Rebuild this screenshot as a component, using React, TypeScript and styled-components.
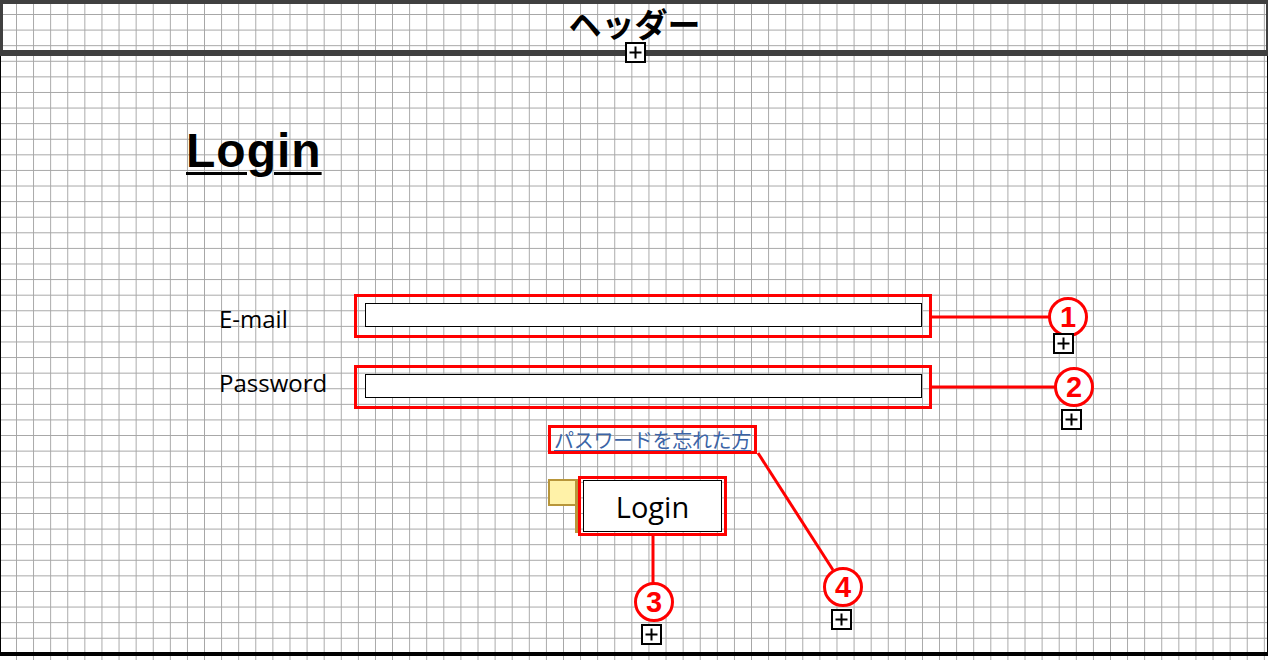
import React from 'react';
import styled, { createGlobalStyle } from 'styled-components';

const GlobalStyle = createGlobalStyle`
  html, body {
    margin: 0;
    padding: 0;
    background: #ffffff;
  }
  * {
    box-sizing: border-box;
  }
`;

const RED = '#ff0000';

const Page = styled.div`
  position: relative;
  width: 1268px;
  height: 660px;
  overflow: hidden;
  background-color: #ffffff;
  background-image: linear-gradient(to right, #a6a6a6 1px, transparent 1px),
    linear-gradient(to bottom, #a6a6a6 1px, transparent 1px);
  background-size: 17.1px 15.6px;
  background-position: 16px 14px;
  font-family: 'Open Sans', 'Noto Sans CJK JP', sans-serif;
`;

const Header = styled.header`
  height: 56px;
  display: flex;
  justify-content: center;
  align-items: center;
  padding-bottom: 8px;
  border-top: 4px solid #404040;
  border-left: 3px solid #404040;
  border-right: 2px solid #404040;
  border-bottom: 6px solid #404040;
  font-family: 'Noto Sans CJK JP', sans-serif;
  font-weight: 700;
  font-size: 33px;
  line-height: 1;
  color: #000;
`;

const Main = styled.main`
  height: 600px;
  display: flex;
  flex-direction: column;
  padding-top: 67px;
  border-left: 1px solid #000;
  border-right: 1px solid #000;
  border-bottom: 4px solid #000;
`;

const Title = styled.h1`
  margin: 0;
  padding-left: 185px;
  font-family: 'Liberation Sans', Arial, sans-serif;
  font-size: 48px;
  font-weight: 700;
  line-height: 56px;
  letter-spacing: 1px;
  color: #000;

  span {
    text-decoration: underline;
    text-decoration-thickness: 2.5px;
    text-underline-offset: 5px;
  }
`;

const Form = styled.div`
  margin-top: 115px;
  display: flex;
  flex-direction: column;
  gap: 27px;
`;

const Row = styled.div`
  display: flex;
  align-items: center;
  padding-left: 218px;
`;

// $lift moves the label up (negative = down) from the row's centre line
const Label = styled.label<{ $lift: number }>`
  width: 135px;
  padding-top: ${(p) => (p.$lift < 0 ? -2 * p.$lift : 0)}px;
  padding-bottom: ${(p) => (p.$lift > 0 ? 2 * p.$lift : 0)}px;
  font-size: 24px;
  line-height: 32px;
  color: #000;
`;

const Highlight = styled.div<{ $w?: number; $h: number }>`
  width: ${(p) => (p.$w ? `${p.$w}px` : 'auto')};
  height: ${(p) => p.$h}px;
  border: 3px solid ${RED};
`;

const FieldFrame = styled(Highlight)`
  padding: 6px 0 0 8px;
`;

const TextBox = styled.div`
  width: 557px;
  height: 24px;
  border: 1px solid #000;
  background: #fff;
`;

const LinkRow = styled.div`
  margin-top: 16px;
  padding-left: 547px;
  display: flex;
`;

const LinkFrame = styled(Highlight)`
  padding: 0 3px;
`;

const ForgotLink = styled.a`
  display: block;
  font-family: 'Noto Sans CJK JP', sans-serif;
  font-size: 20px;
  line-height: 23px;
  letter-spacing: -0.3px;
  color: #3b64a6;
  text-decoration: underline;
  text-decoration-thickness: 1px;
  text-underline-offset: 2px;
  cursor: pointer;
`;

const ButtonRow = styled.div`
  margin-top: 22px;
  padding-left: 547px;
  display: flex;
  align-items: flex-start;
`;

const Sticky = styled.div`
  margin-top: 3px;
  width: 27px;
  height: 27px;
  background: #fff2a8;
  border: 2px solid #b8963a;
  border-right: none;
`;

const StickyBar = styled.div`
  margin-top: 3px;
  width: 3px;
  height: 54px;
  background: #b8963a;
`;

const ButtonFrame = styled(Highlight)`
  padding: 1px 2px;
`;

const LoginButton = styled.button`
  width: 139px;
  height: 52px;
  border: 1px solid #000;
  background: #fff;
  font-family: 'Open Sans', sans-serif;
  font-size: 29px;
  color: #000;
  padding: 0;
  cursor: pointer;
`;

const Overlay = styled.svg`
  position: absolute;
  left: 0;
  top: 0;
  pointer-events: none;
`;

const Marker = styled.div<{ $x: number; $y: number }>`
  position: absolute;
  left: ${(p) => p.$x - 20}px;
  top: ${(p) => p.$y - 20}px;
  width: 40px;
  height: 40px;
  border-radius: 50%;
  border: 3px solid ${RED};
  background: #fff;
  display: flex;
  align-items: center;
  justify-content: center;
  padding-top: 1px;
  font-family: 'Liberation Sans', Arial, sans-serif;
  font-weight: 700;
  font-size: 29px;
  line-height: 1;
  color: ${RED};
`;

const PlusBox = styled.div<{ $x: number; $y: number }>`
  position: absolute;
  left: ${(p) => p.$x}px;
  top: ${(p) => p.$y}px;
  width: 21px;
  height: 21px;
  border: 2px solid #000;
  background: #fff;
  display: flex;
  align-items: center;
  justify-content: center;
`;

const Plus = ({ x, y }: { x: number; y: number }) => (
  <PlusBox $x={x} $y={y}>
    <svg width="17" height="17" viewBox="0 0 17 17">
      <path d="M2.5 8.5H14.5M8.5 2.5V14.5" stroke="#000" strokeWidth="2" />
    </svg>
  </PlusBox>
);

const markers = [
  { n: '1', x: 1068, y: 317 },
  { n: '2', x: 1074, y: 387 },
  { n: '3', x: 654, y: 602 },
  { n: '4', x: 843, y: 587 },
];

const pluses = [
  { x: 625, y: 42 },
  { x: 1053, y: 333 },
  { x: 1061, y: 409 },
  { x: 641, y: 624 },
  { x: 831, y: 609 },
];

export default function App() {
  return (
    <>
      <GlobalStyle />
      <Page>
        <Header>ヘッダー</Header>
        <Main>
          <Title>
            <span>Login</span>
          </Title>
          <Form>
            <Row>
              <Label $lift={-3}>E-mail</Label>
              <FieldFrame $w={578} $h={44}>
                <TextBox />
              </FieldFrame>
            </Row>
            <Row>
              <Label $lift={4.5}>Password</Label>
              <FieldFrame $w={578} $h={44}>
                <TextBox />
              </FieldFrame>
            </Row>
          </Form>
          <LinkRow>
            <LinkFrame $h={29}>
              <ForgotLink>パスワードを忘れた方</ForgotLink>
            </LinkFrame>
          </LinkRow>
          <ButtonRow>
            <Sticky />
            <StickyBar />
            <ButtonFrame $w={149} $h={60}>
              <LoginButton>Login</LoginButton>
            </ButtonFrame>
          </ButtonRow>
        </Main>

        {/* annotation connectors */}
        <Overlay width="1268" height="660">
          <g stroke={RED} strokeWidth="3" fill="none">
            <line x1="932" y1="317" x2="1049" y2="317" />
            <line x1="932" y1="387" x2="1055" y2="387" />
            <line x1="653" y1="536" x2="653" y2="583" />
            <line x1="758" y1="453" x2="833" y2="570" />
          </g>
        </Overlay>
        {markers.map((m) => (
          <Marker key={m.n} $x={m.x} $y={m.y}>
            {m.n}
          </Marker>
        ))}
        {pluses.map((p, i) => (
          <Plus key={i} x={p.x} y={p.y} />
        ))}
      </Page>
    </>
  );
}
